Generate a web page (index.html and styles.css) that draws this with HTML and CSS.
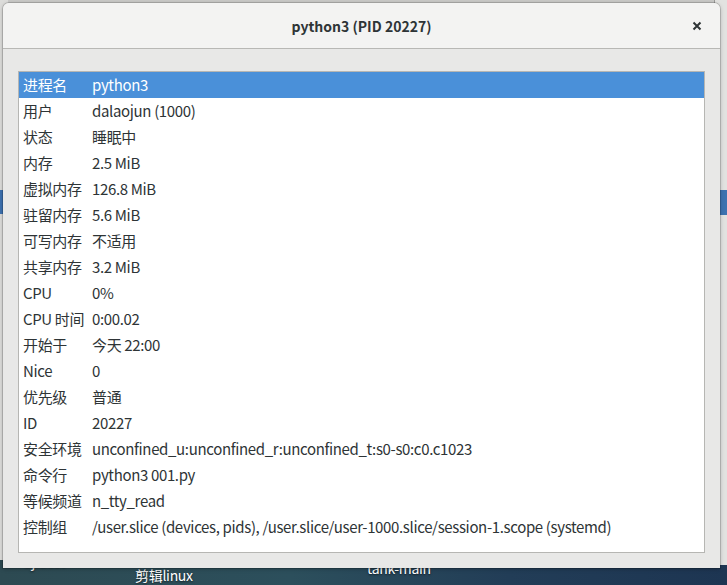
FILE: index.html
```html
<!DOCTYPE html>
<html lang="zh-CN">
<head>
<meta charset="utf-8">
<title>python3 (PID 20227)</title>
<link rel="stylesheet" href="styles.css">
</head>
<body>
<div class="desktop">
  <div class="bgwin-top"></div>
  <div class="bgwin-left"><div class="sel"></div></div>
  <div class="bgwin-right"><div class="sel"></div></div>
  <div class="icon-label lbl1">ajiuest</div>
  <div class="icon-label lbl2">剪辑linux</div>
  <div class="icon-label lbl3">tank-main</div>

  <div class="dialog">
    <div class="titlebar">
      <div class="title">python3 (PID 20227)</div>
      <div class="close">
        <svg width="10" height="10" viewBox="0 0 10 10"><path d="M1.5 1.5 L8.5 8.5 M8.5 1.5 L1.5 8.5" stroke="#2e3436" stroke-width="2" fill="none"/></svg>
      </div>
    </div>
    <div class="content">
      <div class="list">
        <div class="row selected"><span class="k">进程名</span><span class="v">python3</span></div>
        <div class="row"><span class="k">用户</span><span class="v">dalaojun (1000)</span></div>
        <div class="row"><span class="k">状态</span><span class="v">睡眠中</span></div>
        <div class="row"><span class="k">内存</span><span class="v">2.5 MiB</span></div>
        <div class="row"><span class="k">虚拟内存</span><span class="v">126.8 MiB</span></div>
        <div class="row"><span class="k">驻留内存</span><span class="v">5.6 MiB</span></div>
        <div class="row"><span class="k">可写内存</span><span class="v">不适用</span></div>
        <div class="row"><span class="k">共享内存</span><span class="v">3.2 MiB</span></div>
        <div class="row"><span class="k">CPU</span><span class="v">0%</span></div>
        <div class="row"><span class="k">CPU 时间</span><span class="v">0:00.02</span></div>
        <div class="row"><span class="k">开始于</span><span class="v">今天 22:00</span></div>
        <div class="row"><span class="k">Nice</span><span class="v">0</span></div>
        <div class="row"><span class="k">优先级</span><span class="v">普通</span></div>
        <div class="row"><span class="k">ID</span><span class="v">20227</span></div>
        <div class="row"><span class="k">安全环境</span><span class="v">unconfined_u:unconfined_r:unconfined_t:s0-s0:c0.c1023</span></div>
        <div class="row"><span class="k">命令行</span><span class="v">python3 001.py</span></div>
        <div class="row"><span class="k">等候频道</span><span class="v">n_tty_read</span></div>
        <div class="row"><span class="k">控制组</span><span class="v">/user.slice (devices, pids), /user.slice/user-1000.slice/session-1.scope (systemd)</span></div>
      </div>
    </div>
  </div>
</div>
</body>
</html>
```
FILE: styles.css
```css
html, body {
  margin: 0;
  padding: 0;
}
body {
  font-family: "Noto Sans CJK SC", "Noto Sans", sans-serif;
  color: #2e3436;
}
.desktop {
  position: relative;
  width: 727px;
  height: 585px;
  overflow: hidden;
  background: linear-gradient(90deg, #2d4a52 0%, #2c4f5c 40%, #223d57 70%, #1d3552 100%);
}
.bgwin-top {
  position: absolute;
  left: 0;
  top: 0;
  width: 727px;
  height: 10px;
  background: #c9c9c7;
}
.bgwin-left {
  position: absolute;
  left: 0;
  top: 0;
  width: 8px;
  height: 560px;
  background: #dcdcda;
}
.bgwin-left .sel {
  position: absolute;
  left: 0;
  top: 190px;
  width: 8px;
  height: 24px;
  background: #3d72b0;
}
.bgwin-right {
  position: absolute;
  right: 0;
  top: 0;
  width: 12px;
  height: 565px;
  background: #e2e2e0;
  border-left: 1px solid #9a9a98;
}
.bgwin-right .sel {
  position: absolute;
  left: 0;
  top: 190px;
  width: 12px;
  height: 25px;
  background: #3d72b0;
}
.icon-label {
  position: absolute;
  color: #ffffff;
  font-size: 14px;
  line-height: 16px;
  letter-spacing: -0.3px;
  text-shadow: 0 1px 2px rgba(0,0,0,0.6);
}
.lbl1 { left: 24px; top: 553px; }
.lbl2 { left: 135px; top: 567px; }
.lbl3 { left: 367px; top: 560px; }

.dialog {
  position: absolute;
  left: 3px;
  top: 3px;
  width: 717px;
  height: 565px;
  background: #e8e8e7;
  border-radius: 6px 6px 0 0;
  box-shadow: 0 0 0 1px rgba(0,0,0,0.15), 0 1px 4px rgba(0,0,0,0.25);
  display: flex;
  flex-direction: column;
}
.titlebar {
  height: 45px;
  flex: none;
  background: #f3f3f2;
  border-bottom: 1px solid #b8b8b5;
  border-radius: 6px 6px 0 0;
  display: flex;
  align-items: center;
  justify-content: center;
  position: relative;
}
.title {
  font-weight: bold;
  font-size: 14px;
  color: #2e3436;
}
.close {
  position: absolute;
  left: 689px;
  top: 18px;
  width: 10px;
  height: 10px;
  display: flex;
}
.content {
  flex: 1;
  padding: 22px 15px 15px 15px;
  display: flex;
}
.list {
  flex: 1;
  background: #ffffff;
  border: 1px solid #b6b6b3;
  display: flex;
  flex-direction: column;
}
.row {
  display: grid;
  grid-template-columns: 69px 1fr;
  height: 26px;
  line-height: 26px;
  padding-left: 4px;
  font-size: 15px;
  letter-spacing: -0.35px;
  white-space: nowrap;
}
.row.selected {
  background: #4a90d9;
  color: #ffffff;
}
```
